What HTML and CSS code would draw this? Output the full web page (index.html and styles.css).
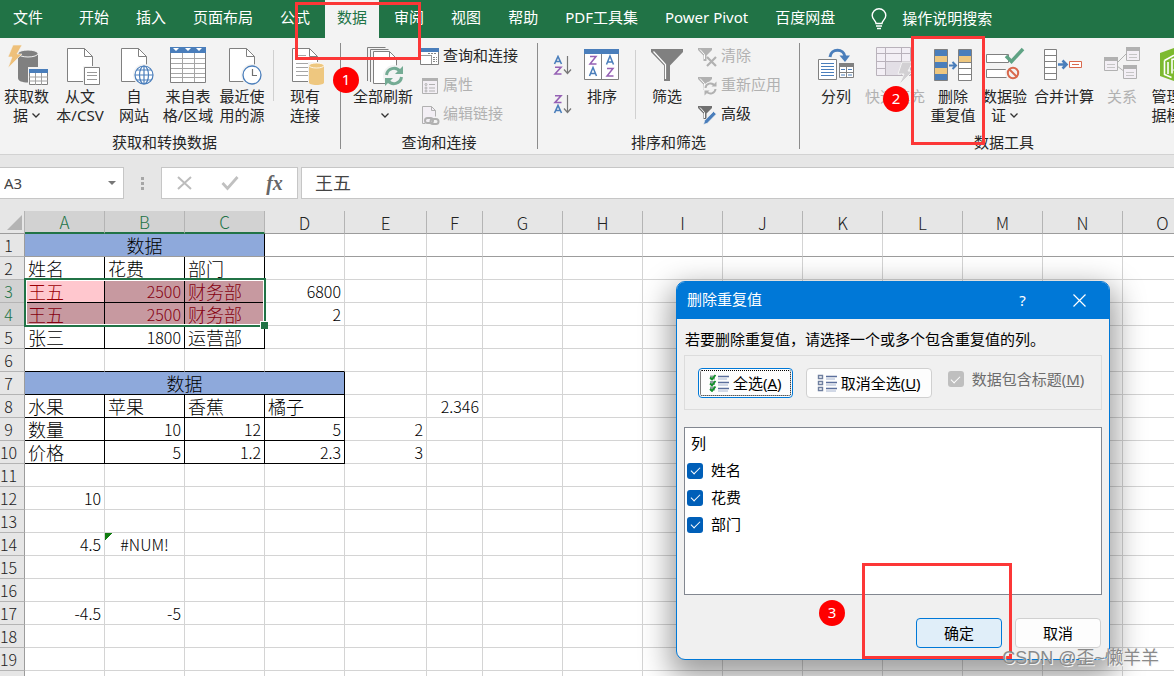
FILE: index.html
```html
<!DOCTYPE html>
<html lang="zh-CN">
<head>
<meta charset="utf-8">
<title>删除重复值</title>
<link rel="stylesheet" href="styles.css">
</head>
<body>
<div class="app">
  <nav class="tabs">
    <button class="tab tab-file">文件</button>
    <button class="tab">开始</button>
    <button class="tab">插入</button>
    <button class="tab">页面布局</button>
    <button class="tab">公式</button>
    <button class="tab tab-active">数据</button>
    <button class="tab">审阅</button>
    <button class="tab">视图</button>
    <button class="tab">帮助</button>
    <button class="tab">PDF工具集</button>
    <button class="tab">Power Pivot</button>
    <button class="tab">百度网盘</button>
    <button class="tell-me">
      <svg width="16" height="22" viewBox="0 0 16 22" fill="none" stroke="#fff" stroke-width="1.4"><path d="M5 15.5C5 12.500 1.200 11.500 1.200 7.500a6.800 6.800 0 0 1 13.600 0C14.800 11.500 11 12.500 11 15.500ZM5 18h6M6 20.500h4"/></svg>
      操作说明搜索
    </button>
  </nav>

  <div class="ribbon">
    <section class="group group-get">
      <div class="group-body">
        <button class="big w53">
          <svg class="icon" width="42" height="42" viewBox="0 0 42 42"><path d="M12 10v24c0 3 4 4.500 10 4.500s10-1.500 10-4.500V10z" fill="#808080"/><ellipse cx="22" cy="9.500" rx="10" ry="3.500" fill="#808080" stroke="#f3f3f3"/><path d="M7 1h9l-5 9h5L2 24l4-11H2z" fill="#eec07a" stroke="#f3f3f3" stroke-width=".6"/><path d="M22 23h21v18H22z" fill="#f3f3f3"/><path d="M23.500 25.500h18v15h-18z" fill="#fff" stroke="#808080"/><path d="M23 25h19v4H23z" fill="#4a7ebb"/><path d="M23 33h19M23 37h19M29.500 29v12M35.500 29v12" stroke="#a0a0a0"/></svg>
          <span>获取数<br>据<svg class="chev" viewBox="0 0 8 5"><path d="M.5.5 4 4 7.500.5"/></svg></span>
        </button>
        <button class="big w54">
          <svg class="icon" width="42" height="42" viewBox="0 0 42 42"><path d="M8.500 4.500h17l8 8v25h-25z" fill="#fff" stroke="#808080"/><path d="M25.500 4.500v8h8" fill="none" stroke="#808080"/><path d="M24 22h19v20H24z" fill="#f3f3f3"/><path d="M25.500 23.500h15v17h-15z" fill="#fff" stroke="#808080"/><path d="M28 28.500h10M28 31.500h10M28 35.500h10" stroke="#999"/></svg>
          <span>从文<br>本/CSV</span>
        </button>
        <button class="big w54">
          <svg class="icon" width="42" height="42" viewBox="0 0 42 42"><path d="M8.500 4.500h17l8 8v25h-25z" fill="#fff" stroke="#808080"/><path d="M25.500 4.500v8h8" fill="none" stroke="#808080"/><circle cx="31" cy="31" r="11" fill="#f3f3f3"/><g fill="none" stroke="#4a7ebb" stroke-width="1.200"><circle cx="31" cy="31" r="9" fill="#fff"/><ellipse cx="31" cy="31" rx="4.500" ry="9"/><path d="M31 22v18M22 31h18M24 26h14M24 36h14"/></g></svg>
          <span>自<br>网站</span>
        </button>
        <button class="big w54">
          <svg class="icon" width="42" height="42" viewBox="0 0 42 42"><path d="M3.500 3.500h35v35h-35z" fill="#fff" stroke="#808080"/><path d="M3 3h36v6H3z" fill="#4a7ebb"/><path d="M6 4h6l-3 3zM18 4h6l-3 3zM29 4h6l-3 3z" fill="#fff"/><path d="M4 14.500h34M4 19.500h34M4 24.500h34M4 29.500h34M4 33.500h34M15.500 9v29M27.500 9v29" stroke="#a6a6a6"/></svg>
          <span>来自表<br>格/区域</span>
        </button>
        <button class="big w54">
          <svg class="icon" width="42" height="42" viewBox="0 0 42 42"><path d="M8.500 4.500h17l8 8v25h-25z" fill="#fff" stroke="#808080"/><path d="M25.500 4.500v8h8" fill="none" stroke="#808080"/><circle cx="31" cy="31" r="11" fill="#f3f3f3"/><circle cx="31" cy="31" r="9" fill="#fff" stroke="#4a7ebb" stroke-width="1.300"/><path d="M31.500 25v6.500H36" fill="none" stroke="#707070" stroke-width="1.200"/></svg>
          <span>最近使<br>用的源</span>
        </button>
        <i class="divider divider-short"></i>
        <button class="big w56">
          <svg class="icon" width="42" height="42" viewBox="0 0 42 42"><path d="M8.500 4.500h17l8 8v25h-25z" fill="#fff" stroke="#808080"/><path d="M25.500 4.500v8h8" fill="none" stroke="#808080"/><path d="M12 11.500h10M12 15.500h18M12 19.500h18M12 23.500h12M12 27.500h12M12 31.500h12" stroke="#a6a6a6"/><path d="M24 18h18v24H24z" fill="#f3f3f3"/><path d="M25 21.500v17c0 1.500 3 2.500 7.500 2.500s7.500-1 7.500-2.500v-17z" fill="#eec77f"/><ellipse cx="32.500" cy="21.500" rx="7.500" ry="2.500" fill="#eec77f" stroke="#fff" stroke-width=".8"/></svg>
          <span>现有<br>连接</span>
        </button>
      </div>
      <h2 class="group-title">获取和转换数据</h2>
    </section>

    <section class="group group-query">
      <div class="group-body">
        <button class="big w72">
          <svg class="icon" width="42" height="42" viewBox="0 0 42 42"><g fill="#fff" stroke="#808080"><path d="M5.500 37V3.500h18M8.500 38V5.500h18" fill="none"/><path d="M11.500 7.500h16l7 7v25h-23z"/><path d="M27.500 7.500v7h7" fill="none"/></g><circle cx="32" cy="32" r="11" fill="#f3f3f3"/><g fill="none" stroke="#74ab94" stroke-width="3"><path d="M24.500 31a7.500 7.500 0 0 1 13.500-3.500M39.500 33A7.500 7.500 0 0 1 26 36.500"/></g><path d="M41 22v8h-8zM23 42v-8h8z" fill="#74ab94"/></svg>
          <span>全部刷新<br><svg class="chev" viewBox="0 0 8 5"><path d="M.5.5 4 4 7.500.5"/></svg></span>
        </button>
        <div class="stack">
          <button class="small"><svg width="20" height="20" viewBox="0 0 20 20"><path d="M.5 1.500h18v16H.5z" fill="#fff" stroke="#808080"/><path d="M0 1h19v4H0z" fill="#4a7ebb"/><path d="M1 8.500h10M11.500 8v9" stroke="#999"/><path d="M8 6.500h9M13 10.500h4M13 12.500h4M13 14.500h4" stroke="#888" stroke-dasharray="2 1"/></svg>查询和连接</button>
          <button class="small" disabled><svg width="20" height="20" viewBox="0 0 20 20"><path d="M2.500 2.500h15v15h-15z" fill="#f3eff5" stroke="#b1b1b1"/><path d="M2 2h16v3H2z" fill="#b1b1b1"/><g fill="none" stroke="#b1b1b1"><circle cx="6" cy="8.500" r="1"/><circle cx="6" cy="12" r="1"/><circle cx="6" cy="15" r="1"/><path d="M9 8.500h6M9 12h6M9 15h6"/></g></svg>属性</button>
          <button class="small" disabled><svg width="20" height="20" viewBox="0 0 20 20"><path d="M5 18.500H2.500v-17h9l4 4v6" fill="#f3eff5" stroke="#b1b1b1"/><path d="M11.500 1.500v4h4" fill="none" stroke="#b1b1b1"/><g fill="none" stroke="#b1b1b1" stroke-width="2"><rect x="5" y="13" width="8" height="5" rx="2.500"/><rect x="10.500" y="14" width="8" height="5" rx="2.500"/></g></svg>编辑链接</button>
        </div>
      </div>
      <h2 class="group-title">查询和连接</h2>
    </section>

    <section class="group group-sort">
      <div class="group-body">
        <div class="stack stack-az">
          <button class="az" aria-label="升序"><svg width="20" height="22" viewBox="0 0 20 22" fill="none" stroke-width="1.600"><path d="M1.500 9 5 1.500 8.500 9M2.500 6.500h5" stroke="#4a7ebb"/><path d="M2 12.200h6L2 19h6.500" stroke="#9560b4"/><path d="M14.500 1v17M11 14.500l3.500 4 3.500-4" stroke="#777" stroke-width="1.200"/></svg></button>
          <button class="az" aria-label="降序"><svg width="20" height="22" viewBox="0 0 20 22" fill="none" stroke-width="1.600"><path d="M2 1.800h6L2 8.500h6.500" stroke="#9560b4"/><path d="M1.500 19 5 11.500 8.500 19M2.500 16.500h5" stroke="#4a7ebb"/><path d="M14.500 1v17M11 14.500l3.500 4 3.500-4" stroke="#777" stroke-width="1.200"/></svg></button>
        </div>
        <button class="big w58">
          <svg class="icon" width="42" height="42" viewBox="0 0 42 42"><path d="M3.500 5.500h34v30h-34z" fill="#fff" stroke="#808080"/><path d="M3 5h35v5H3z" fill="#4a7ebb"/><path d="M20.500 10v26" stroke="#808080"/><g fill="none" stroke-width="1.500"><path d="M9 12.500h6L9 20h6.500M26 24.500h6L26 32h6.500" stroke="#9560b4"/><path d="M8.500 32l3.500-8.500 3.500 8.500M9.500 29.500h5M25.500 20.500l3.500-8.500 3.500 8.500M26.500 18h5" stroke="#4a7ebb"/></g></svg>
          <span>排序</span>
        </button>
        <i class="divider divider-tall"></i>
        <button class="big w56">
          <svg class="icon" width="42" height="42" viewBox="0 0 42 42"><path d="M5 5h32v3L24 21.500V37h-6V21.500L5 8z" fill="#808080"/><path d="M7.500 7.500 19.500 20.500V35" fill="none" stroke="#fff" stroke-width="1.200"/></svg>
          <span>筛选</span>
        </button>
        <div class="stack stack-filter">
          <button class="small" disabled><svg width="20" height="20" viewBox="0 0 20 20"><path d="M0 1h14v2L8.500 8.500V14h-3V8.500L0 3z" fill="#b1b1b1"/><path d="M2 2.500 6.500 7.500V12" fill="none" stroke="#fff"/><path d="m9 10 9 9M18 10l-9 9" stroke="#b1b1b1" stroke-width="2.200"/></svg>清除</button>
          <button class="small" disabled><svg width="20" height="20" viewBox="0 0 20 20"><path d="M0 1h14v2L8.500 8.500V14h-3V8.500L0 3z" fill="#b1b1b1"/><path d="M2 2.500 6.500 7.500V10" fill="none" stroke="#fff"/><g fill="none" stroke="#f3f3f3" stroke-width="4"><circle cx="12.500" cy="12.500" r="5"/></g><g fill="none" stroke="#b1b1b1" stroke-width="2"><path d="M7.500 12a5 5 0 0 1 9-2.500M17.500 13a5 5 0 0 1-9 2.500"/></g><path d="M18.500 5.500v5h-5zM6.500 19.500v-5h5z" fill="#b1b1b1"/></svg>重新应用</button>
          <button class="small"><svg width="20" height="20" viewBox="0 0 20 20"><path d="M0 1h14v2L8.500 8.500V14h-3V8.500L0 3z" fill="#707070"/><path d="M2 2.500 6.500 7.500V13" fill="none" stroke="#fff"/><path d="m5.500 19.500 1.200-4L15.500 6.500l2.800 2.600-9 9.200z" fill="#4a7ebb" stroke="#f3f3f3" stroke-width=".7"/></svg>高级</button>
        </div>
      </div>
      <h2 class="group-title">排序和筛选</h2>
    </section>

    <section class="group group-tools">
      <div class="group-body">
        <button class="big w58">
          <svg class="icon" width="42" height="42" viewBox="0 0 42 42"><path d="M3.500 15.500h18v20h-18z" fill="#fff" stroke="#808080"/><path d="M6 19.500h13M6 22.500h13M6 25.500h13M6 28.500h13M6 31.500h13" stroke="#4a7ebb"/><path d="M24.500 20.500h14v13h-14z" fill="#fff" stroke="#808080"/><path d="M24 19h15v4H24z" fill="#808080"/><path d="M31.500 23v11M24 28.500h15" stroke="#808080"/><path d="M26 25.500h4M33 25.500h4M26 31h4M33 31h4" stroke="#4a7ebb"/><path d="M15 13c1-9 14-9 15 0" fill="none" stroke="#4a7ebb" stroke-width="3"/><path d="M24.500 11.500h10.500L30 18z" fill="#4a7ebb"/></svg>
          <span>分列</span>
        </button>
        <button class="big w60" disabled>
          <svg class="icon" width="42" height="42" viewBox="0 0 42 42"><path d="M2.500 3.500h34v28h-34z" fill="#f3eff5" stroke="#b9b2bb"/><path d="M2 9.500h34M2 17.500h34M2 24.500h34M11.500 3v6M27.500 3v6M11.500 10v21M27.500 10v21" stroke="#b9b2bb"/><path d="M12 18h15v13H12z" fill="#e3dfe6"/><path d="M28 18h11l-5 9h5L25 41l5-11h-6z" fill="#d2d0d3" stroke="#f3f3f3"/></svg>
          <span>快速填充</span>
        </button>
        <button class="big w56">
          <svg class="icon" width="42" height="42" viewBox="0 0 42 42"><path d="M2.500 5.500h13v31h-13z" fill="#4a7ebb"/><path d="M3 12h12v6H3zM3 24h12v6H3z" fill="#eec77f"/><path d="M2.500 5.500h13v31h-13z" fill="none" stroke="#808080"/><path d="M26.500 5.500h13v31h-13z" fill="#fff"/><path d="M27 6h12v6H27z" fill="#4a7ebb"/><path d="M27 12h12v6H27z" fill="#eec77f"/><path d="M26.500 5.500h13v31h-13zM27 18.500h12M27 24.500h12M27 30.500h12" fill="none" stroke="#808080"/><path d="M17 21.500h6M20.500 18l3.500 3.500-3.500 3.500" fill="none" stroke="#4a7ebb" stroke-width="2"/></svg>
          <span>删除<br>重复值</span>
        </button>
        <button class="big w47">
          <svg class="icon" width="42" height="42" viewBox="0 0 42 42"><g fill="#fff" stroke="#808080"><path d="M2.500 10.500h22v8h-22zM2.500 25.500h22v8h-22z"/></g><path d="m22 12 5.500 5.500L39 5" fill="none" stroke="#5fa384" stroke-width="3.500"/><circle cx="29" cy="29" r="8" fill="#f3f3f3"/><g fill="none" stroke="#d9694d" stroke-width="2"><circle cx="29" cy="29" r="5.200"/><path d="m25 25 8 8"/></g></svg>
          <span>数据验<br>证<svg class="chev" viewBox="0 0 8 5"><path d="M.5.5 4 4 7.500.5"/></svg></span>
        </button>
        <button class="big w72">
          <svg class="icon" width="42" height="42" viewBox="0 0 42 42"><path d="M1.500 5.500h12v30h-12zM2 11.500h11M2 17.500h11M2 23.500h11M2 29.500h11" fill="#fff" stroke="#808080"/><path d="M15 20.500h8M19.500 16.500l4 4-4 4" fill="none" stroke="#4a7ebb" stroke-width="2.600"/><path d="M26.500 17.500h12v6h-12z" fill="#fff" stroke="#d9694d"/><path d="M29 20.500h7" stroke="#d9694d"/></svg>
          <span>合并计算</span>
        </button>
        <button class="big w44" disabled>
          <svg class="icon" width="42" height="42" viewBox="0 0 42 42"><path d="M16 19 26 9M16 22l8 6" stroke="#b1b1b1"/><g fill="#f3eff5" stroke="#b1b1b1"><path d="M3.500 13.500h13v13h-13zM25.500 3.500h13v13h-13zM22.500 21.500h13v13h-13z"/></g><path d="M3 13h14v4H3zM25 3h14v4H25zM22 21h14v4H22z" fill="#b1b1b1"/><path d="M6 20.500h8M6 23.500h8M28 10.500h8M28 13.500h8M25 28.500h8M25 31.500h8" stroke="#c5c5c5"/></svg>
          <span>关系</span>
        </button>
        <button class="big w60">
          <svg class="icon" width="42" height="42" viewBox="0 0 42 42"><path d="m7 9 14-5 14 5v23l-14 5-14-5z" fill="#7dba30"/><path d="M11.500 16.500v14l7 3M11.500 16.500l9-5h14M15 18v12M19 29.500v-14l9-2" fill="none" stroke="#fff" stroke-width="1.600"/><path d="M21 26h4v-7M23 21l2-3 2 3M23 24l-2 2 2 2" fill="none" stroke="#fff" stroke-width="1.300"/></svg>
          <span>管理数<br>据模型</span>
        </button>
      </div>
      <h2 class="group-title">数据工具</h2>
    </section>
  </div>

  <div class="formula-bar">
    <div class="name-box"><input class="name-input" aria-label="名称框" value="A3"><i class="drop"></i></div>
    <div class="dots"><i></i><i></i><i></i></div>
    <div class="fx-box">
      <button class="fx-btn" aria-label="取消"><svg width="16" height="16" viewBox="0 0 16 16"><path d="m1 2 13 12M14 2 1 14" stroke="#bcbcbc" stroke-width="2"/></svg></button>
      <button class="fx-btn" aria-label="输入"><svg width="18" height="16" viewBox="0 0 18 16"><path d="m1.500 8 5 5.500L16.500 2" fill="none" stroke="#c0c0c0" stroke-width="2.800"/></svg></button>
      <button class="fx-btn fx">fx</button>
    </div>
    <input class="formula-input" aria-label="编辑栏" value="王五">
  </div>

  <main class="sheet">
    <table class="grid">
      <colgroup><col class="c-row"><col class="c"><col class="c"><col class="c"><col class="c"><col class="c-e"><col class="c-f"><col class="c"><col class="c"><col class="c"><col class="c"><col class="c"><col class="c"><col class="c"><col class="c"><col class="c"></colgroup>
      <thead>
        <tr><th class="corner"><svg width="15" height="15" viewBox="0 0 15 15"><path d="M15 0v15H0z" fill="#b4b4b4"/></svg></th><th class="on">A</th><th class="on">B</th><th class="on">C</th><th>D</th><th>E</th><th>F</th><th>G</th><th>H</th><th>I</th><th>J</th><th>K</th><th>L</th><th>M</th><th>N</th><th>O</th></tr>
      </thead>
      <tbody>
        <tr class="frozen"><th>1</th><td class="title br" colspan="3">数据</td><td><td><td><td><td><td><td><td><td><td><td><td></tr>
        <tr><th>2</th><td class="br">姓名</td><td class="br">花费</td><td class="br">部门</td><td><td><td><td><td><td><td><td><td><td><td><td></tr>
        <tr><th class="on">3</th><td class="br bb dup dup-active">王五</td><td class="br bb dup num">2500</td><td class="br bb dup">财务部</td><td class="num">6800</td><td><td><td><td><td><td><td><td><td><td><td></tr>
        <tr><th class="on">4</th><td class="br bb dup">王五</td><td class="br bb dup num">2500</td><td class="br bb dup">财务部</td><td class="num">2</td><td><td><td><td><td><td><td><td><td><td><td></tr>
        <tr><th>5</th><td class="br bb">张三</td><td class="br bb num">1800</td><td class="br bb">运营部</td><td><td><td><td><td><td><td><td><td><td><td><td></tr>
        <tr><th>6</th><td class="bb"><td class="bb"><td class="bb"><td class="bb"><td><td><td><td><td><td><td><td><td><td><td></tr>
        <tr><th>7</th><td class="title br bb" colspan="4">数据</td><td><td><td><td><td><td><td><td><td><td><td></tr>
        <tr><th>8</th><td class="br bb">水果</td><td class="br bb">苹果</td><td class="br bb">香蕉</td><td class="br bb">橘子</td><td><td class="num">2.346</td><td><td><td><td><td><td><td><td><td></tr>
        <tr><th>9</th><td class="br bb">数量</td><td class="br bb num">10</td><td class="br bb num">12</td><td class="br bb num">5</td><td class="num">2</td><td><td><td><td><td><td><td><td><td><td></tr>
        <tr><th>10</th><td class="br bb">价格</td><td class="br bb num">5</td><td class="br bb num">1.2</td><td class="br bb num">2.3</td><td class="num">3</td><td><td><td><td><td><td><td><td><td><td></tr>
        <tr><th>11</th><td><td><td><td><td><td><td><td><td><td><td><td><td><td><td></tr>
        <tr><th>12</th><td class="num">10</td><td><td><td><td><td><td><td><td><td><td><td><td><td><td></tr>
        <tr><th>13</th><td><td><td><td><td><td><td><td><td><td><td><td><td><td><td></tr>
        <tr><th>14</th><td class="num">4.5</td><td class="num err">#NUM!</td><td><td><td><td><td><td><td><td><td><td><td><td><td></tr>
        <tr><th>15</th><td><td><td><td><td><td><td><td><td><td><td><td><td><td><td></tr>
        <tr><th>16</th><td><td><td><td><td><td><td><td><td><td><td><td><td><td><td></tr>
        <tr><th>17</th><td class="num">-4.5</td><td class="num">-5</td><td><td><td><td><td><td><td><td><td><td><td><td><td></tr>
        <tr><th>18</th><td><td><td><td><td><td><td><td><td><td><td><td><td><td><td></tr>
        <tr><th>19</th><td><td><td><td><td><td><td><td><td><td><td><td><td><td><td></tr>
        <tr><th></th><td><td><td><td><td><td><td><td><td><td><td><td><td><td><td></tr>
      </tbody>
    </table>
    <div class="selection"></div>
  </main>
</div>

<section class="dialog" role="dialog" aria-labelledby="dlg-title">
  <header class="dialog-head">
    <h1 class="dialog-title" id="dlg-title">删除重复值</h1>
    <button class="head-btn">?</button>
    <button class="head-btn" aria-label="关闭"><svg width="13" height="13" viewBox="0 0 13 13"><path d="m.5.5 12 12M12.500.5l-12 12" stroke="#fff" stroke-width="1.200"/></svg></button>
  </header>
  <div class="dialog-body">
    <p class="prompt">若要删除重复值，请选择一个或多个包含重复值的列。</p>
    <div class="options">
      <button class="btn btn-focus"><svg width="20" height="18" viewBox="0 0 20 18"><path d="M1 1.500h5v4H1zM1 7h5v4H1zM1 12.500h5v4H1z" fill="#8d9f9f"/><path d="M9 2.500h11M9 8.500h11M9 14.500h11" stroke="#5c6f9c" stroke-width="1.500"/><path d="M9 5h9M9 11h10M9 17h10" stroke="#a6b4d0"/><path d="m1 3.500 2 2L6.500 1M1 9.500l2 2L6.500 7M1 15l2 2 3.500-4.500" fill="none" stroke="#12922a" stroke-width="1.800"/></svg><span>全选(<u>A</u>)</span></button>
      <button class="btn"><svg width="20" height="18" viewBox="0 0 20 18"><path d="M1.500 1.500h4v3h-4zM1.500 7.500h4v3h-4zM1.500 13.500h4v3h-4z" fill="#fff" stroke="#6f7f9f" stroke-width="1.400"/><path d="M9 2.500h11M9 8.500h11M9 14.500h11" stroke="#5c6f9c" stroke-width="1.500"/><path d="M9 5h9M9 11h10M9 17h10" stroke="#a6b4d0"/></svg><span>取消全选(<u>U</u>)</span></button>
      <label class="check check-off"><input type="checkbox" checked disabled><span>数据包含标题(<u>M</u>)</span></label>
    </div>
    <div class="list">
      <div class="list-head">列</div>
      <label class="check"><input type="checkbox" checked>姓名</label>
      <label class="check"><input type="checkbox" checked>花费</label>
      <label class="check"><input type="checkbox" checked>部门</label>
    </div>
    <footer class="dialog-foot">
      <button class="btn btn-wide btn-ok">确定</button>
      <button class="btn btn-wide">取消</button>
    </footer>
  </div>
</section>

<div class="mark mark-tab"></div>
<div class="mark mark-tool"></div>
<div class="mark mark-ok"></div>
<span class="step step-1">1</span>
<span class="step step-2">2</span>
<span class="step step-3">3</span>
<div class="watermark">CSDN @歪~懒羊羊</div>
</body>
</html>
```

FILE: styles.css
```css
* { box-sizing: border-box; }

body {
  margin: 0;
  position: relative;
  height: 100vh;
  overflow: hidden;
  background: #fff;
  color: #262626;
  font: 15px/19px "Noto Sans", "Noto Sans CJK SC", sans-serif;
}

button, input {
  margin: 0;
  padding: 0;
  border: 0;
  background: none;
  color: inherit;
  font: inherit;
}

svg { flex: none; }

.app {
  display: flex;
  flex-direction: column;
  height: 100vh;
}

/* Tabs */
.tabs {
  display: flex;
  flex: none;
  gap: 3px;
  height: 38px;
  padding-left: 1px;
  overflow: hidden;
  background: #217346;
  color: #fff;
}
.tab {
  padding: 0 12px 3px;
  white-space: nowrap;
}
.tab-file { margin-right: 9px; }
.tab-active {
  background: #f3f3f3;
  color: #217346;
}
.tell-me {
  display: flex;
  align-items: center;
  gap: 15px;
  margin-left: 21px;
  padding-bottom: 1px;
  white-space: nowrap;
}

/* Ribbon */
.ribbon {
  display: flex;
  flex: none;
  overflow: hidden;
  border-bottom: 1px solid #d2d2d2;
  background: #f3f3f3;
}
.group {
  display: flex;
  flex: none;
  flex-direction: column;
  margin: 5px 0;
  border-right: 1px solid #8c8c8c;
}
.group-body {
  display: flex;
  height: 90px;
}
.group-get .group-body { padding-right: 7px; }
.group-get .group-title { padding-right: 11px; }
.group-query .group-body { padding: 0 19px 0 6px; }
.group-sort .group-body { padding: 0 18px 0 15px; }
.group-tools .group-body { padding: 0 4px 0 7px; }
.group-title {
  height: 16px;
  margin: 0;
  font-size: 15px;
  font-weight: 400;
  line-height: 19px;
  text-align: center;
}
.big {
  display: flex;
  flex: none;
  flex-direction: column;
  align-items: center;
  gap: 1px;
  white-space: nowrap;
}
.w44 { width: 44px; }
.w47 { width: 47px; }
.w53 { width: 53px; }
.w54 { width: 54px; }
.w56 { width: 56px; }
.w58 { width: 58px; }
.w60 { width: 60px; }
.w72 { width: 72px; }
.icon { margin-top: 1px; }
.chev {
  width: 8px;
  height: 5px;
  margin-left: 4px;
  vertical-align: 3px;
  fill: none;
  stroke: #333;
  stroke-width: 1.3;
}
.divider {
  width: 1px;
  margin: 7px 3px 0 4px;
  background: #d0d0d0;
}
.divider-short { height: 51px; }
.divider-tall { height: 69px; }
.stack {
  display: flex;
  flex-direction: column;
  align-items: flex-start;
}
.small {
  display: flex;
  align-items: center;
  gap: 3px;
  height: 29px;
  padding: 0 0 4px 1px;
  white-space: nowrap;
}
.small svg { margin-top: 2px; }
button:disabled { color: #b1b1b1; }
.stack-az {
  gap: 17px;
  padding-top: 12px;
}
.az { height: 22px; }
.az svg { display: block; }
.stack-filter { padding-left: 2px; }

/* Formula bar */
.formula-bar {
  display: flex;
  flex: none;
  align-items: center;
  padding: 12px 0;
  background: #e6e6e6;
  color: #444;
}
.name-box, .fx-box, .formula-input {
  height: 32px;
  border: 1px solid #c6c6c6;
  background: #fff;
}
.name-box {
  display: flex;
  align-items: center;
  width: 124px;
  padding: 0 7px 0 4px;
  border-left: 0;
}
.name-input {
  flex: 1;
  min-width: 0;
}
.drop {
  border: 4px solid transparent;
  border-top-color: #777;
  border-bottom-width: 0;
}
.dots {
  display: flex;
  flex-direction: column;
  gap: 2px;
  margin: 0 17px;
}
.dots i {
  width: 3px;
  height: 3px;
  background: #a6a6a6;
}
.fx-box {
  display: flex;
  width: 137px;
  margin-right: 3px;
}
.fx-btn {
  display: flex;
  flex: 1;
  align-items: center;
  justify-content: center;
}
.fx {
  color: #666;
  font: italic bold 20px "Liberation Serif", serif;
}
.formula-input {
  flex: 1;
  min-width: 0;
  padding: 0 13px 2px;
  border-right: 0;
  font-size: 18px;
}

/* Sheet */
.sheet {
  position: relative;
  flex: 1;
  min-height: 0;
  overflow: hidden;
}
.grid {
  width: 1203px;
  border-collapse: separate;
  border-spacing: 0;
  table-layout: fixed;
  color: #000;
  font: 300 18px/22px "Noto Sans CJK SC", sans-serif;
}
.c-row { width: 25px; }
.c { width: 80px; }
.c-e { width: 82px; }
.c-f { width: 56px; }
.grid th, .grid td {
  height: 23px;
  padding: 0 3px;
  border: solid #d4d4d4;
  border-width: 0 1px 1px 0;
  text-align: left;
  white-space: nowrap;
}
.grid th {
  padding: 0;
  border-color: #b4b4b4;
  background: #e6e6e6;
  color: #222;
  font-size: 17px;
  font-weight: 300;
  text-align: center;
}
.grid thead th {
  border-bottom-color: #9c9c9c;
  line-height: 21px;
}
.grid tbody th {
  padding-right: 7px;
  border-right-color: #9c9c9c;
  font-size: 16px;
}
.grid th.on {
  background: #d2d2d2;
  color: #217346;
}
.grid thead th.on { border-bottom: 2px solid #217346; }
.grid .corner svg {
  display: block;
  margin-left: 7px;
}
.grid .num {
  font-size: 16px;
  text-align: right;
}
.grid .br { border-right-color: #000; }
.grid .bb { border-bottom-color: #000; }
.grid .frozen td { border-bottom-color: #9c9c9c; }
.grid .title {
  background: #8ea9db;
  text-align: center;
}
.grid .dup {
  background: #c799a0;
  color: #850010;
}
.grid .dup-active {
  background: #ffc7ce;
  color: #9c0006;
}
.grid .err {
  background: linear-gradient(135deg, #107c10 5px, transparent 5px) no-repeat;
  text-align: center;
}
.selection {
  position: absolute;
  left: 24px;
  top: 67px;
  width: 242px;
  height: 49px;
  border: 2px solid #217346;
  box-shadow: inset 0 0 0 1px #fff;
}
.selection::after {
  content: "";
  position: absolute;
  right: -4px;
  bottom: -4px;
  width: 7px;
  height: 7px;
  border: solid #fff;
  border-width: 1px 0 0 1px;
  background: #217346;
}

/* Dialog */
.dialog {
  position: absolute;
  left: 676px;
  top: 281px;
  width: 434px;
  border: 1px solid #0078d7;
  border-radius: 9px;
  background: #f0f0f0;
  box-shadow: 0 12px 30px 6px rgba(0, 0, 0, .38);
  color: #000;
}
.dialog-head {
  display: flex;
  height: 37px;
  padding: 0 1px 0 10px;
  border-radius: 8px 8px 0 0;
  background: #0078d7;
  color: #fff;
}
.dialog-title {
  flex: 1;
  margin: 0;
  font-size: 15px;
  font-weight: 400;
  line-height: 35px;
}
.head-btn {
  display: flex;
  align-items: center;
  justify-content: center;
  width: 57px;
}
.dialog-body { padding: 11px 7px; }
.prompt {
  margin: 0 0 6px;
  padding-left: 1px;
}
.options {
  display: flex;
  align-items: flex-start;
  gap: 13px;
  height: 55px;
  padding: 12px 13px;
  border: 1px solid #dcdcdc;
}
.btn {
  display: flex;
  align-items: center;
  justify-content: center;
  gap: 4px;
  height: 30px;
  padding: 0 10px;
  border: 1px solid #d0d0d0;
  border-radius: 4px;
  background: #fdfdfd;
  white-space: nowrap;
}
.btn-focus {
  border-color: #0078d7;
  outline: 1px dotted #000;
  outline-offset: -3px;
}
.btn-wide { width: 86px; }
.btn-ok {
  border-color: #0078d7;
  background: #e0eef9;
}
.check {
  display: flex;
  align-items: center;
  gap: 8px;
  height: 27px;
  white-space: nowrap;
}
.check input {
  display: grid;
  place-items: center;
  width: 16px;
  height: 16px;
  border-radius: 3px;
  appearance: none;
  background: #005fb8;
}
.check input::after {
  content: "";
  width: 8px;
  height: 4px;
  margin-bottom: 2px;
  border: solid #fff;
  border-width: 0 0 1px 1px;
  rotate: -45deg;
}
.check-off {
  height: 22px;
  margin-left: 3px;
  color: #6d6d6d;
}
.check-off input { background: #bfbfbf; }
.list {
  height: 168px;
  margin-top: 17px;
  padding: 1px 2px;
  border: 1px solid #828790;
  background: #fff;
}
.list-head {
  padding: 5px 4px 4px;
}
.dialog-foot {
  display: flex;
  justify-content: flex-end;
  gap: 13px;
  margin-top: 23px;
  padding-right: 1px;
}

/* Annotations */
.mark {
  position: absolute;
  border: 3px solid #fc3737;
}
.mark-tab { left: 295px; top: 2px; width: 126px; height: 58px; }
.mark-tool { left: 911px; top: 36px; width: 74px; height: 109px; }
.mark-ok { left: 862px; top: 563px; width: 150px; height: 96px; }
.step {
  position: absolute;
  width: 26px;
  height: 26px;
  border-radius: 50%;
  background: #f00;
  color: #fff;
  line-height: 24px;
  text-align: center;
}
.step-1 { left: 333px; top: 67px; }
.step-2 { left: 883px; top: 86px; }
.step-3 { left: 819px; top: 600px; }
.watermark {
  position: absolute;
  right: 15px;
  bottom: 5px;
  color: #8a8a8a;
  font: 18px/26px "Liberation Sans", "Noto Sans CJK SC", sans-serif;
  text-shadow: 1px 1px 0 #f4f4f4;
}
```
